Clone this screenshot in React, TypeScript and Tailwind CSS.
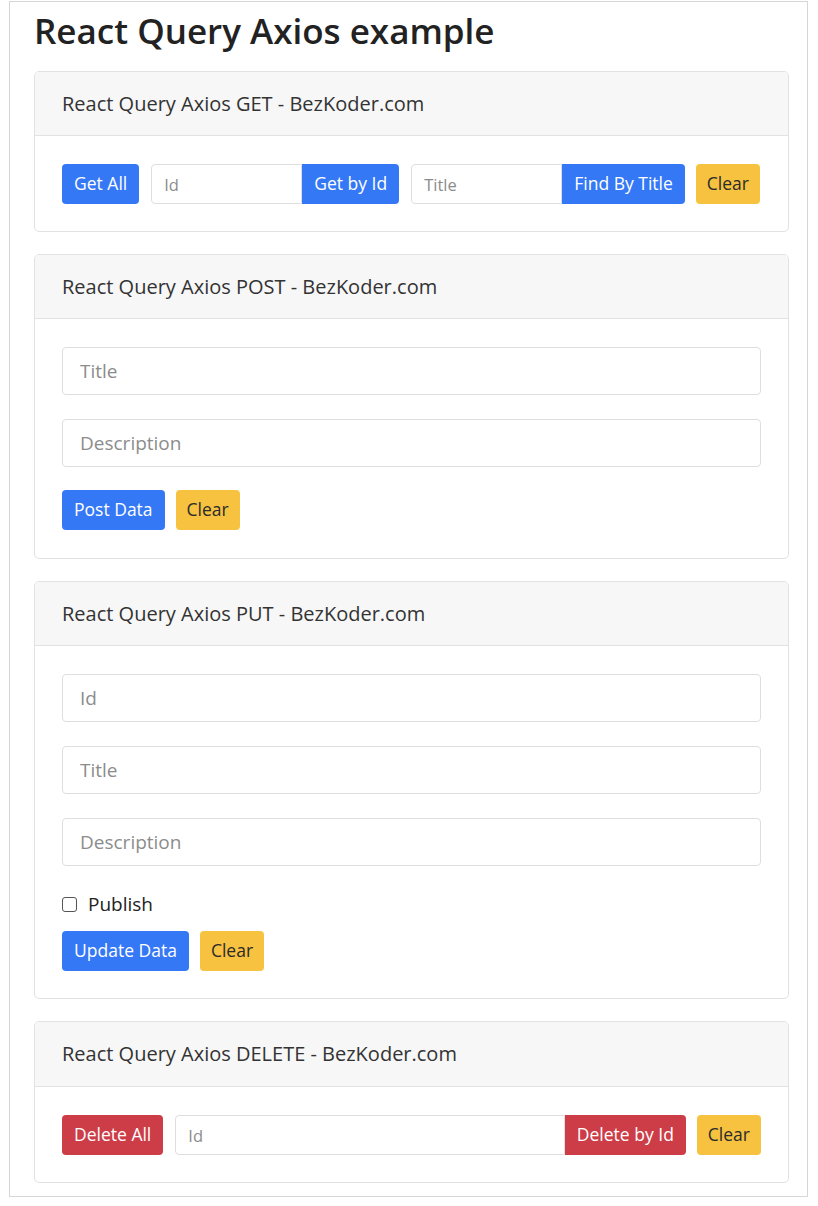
import React from "react";

const font = { fontFamily: '"Open Sans", "Noto Sans", Arial, sans-serif' };

function Btn({ children, color }: { children: React.ReactNode; color: "blue" | "yellow" | "red" }) {
  const cls =
    color === "blue"
      ? "bg-[#3478f6] text-white px-[12px]"
      : color === "red"
      ? "bg-[#cc3d47] text-white px-[12px]"
      : "bg-[#f6c240] text-[#2b2b2b] px-[11px]";
  return (
    <button className={`${cls} h-[40px] rounded-[4px] text-[17.5px] leading-none whitespace-nowrap`}>
      {children}
    </button>
  );
}

function GroupBtn({ children, color }: { children: React.ReactNode; color: "blue" | "red" }) {
  const cls = color === "blue" ? "bg-[#3478f6] text-white" : "bg-[#cc3d47] text-white";
  return (
    <button className={`${cls} h-[40px] px-[12px] rounded-r-[4px] text-[17.5px] leading-none whitespace-nowrap`}>
      {children}
    </button>
  );
}

function SmallInput({ placeholder, className }: { placeholder: string; className: string }) {
  return (
    <input
      placeholder={placeholder}
      className={`${className} h-[40px] border border-[#dedede] rounded-l-[4px] px-[12px] text-[16.5px] placeholder:text-[#8c8c8c] outline-none`}
    />
  );
}

function BigInput({ placeholder }: { placeholder: string }) {
  return (
    <input
      placeholder={placeholder}
      className="w-full h-[48px] border border-[#dedede] rounded-[4px] px-[17px] text-[19px] placeholder:text-[#8c8c8c] outline-none"
    />
  );
}

function Card({ title, children, headH = "h-[64px]", pb = "pb-[27px]" }: { title: string; children: React.ReactNode; headH?: string; pb?: string }) {
  return (
    <div className="border border-[#e2e2e2] rounded-[5px] overflow-hidden">
      <div className={`${headH} bg-[#f7f7f7] border-b border-[#e2e2e2] flex items-center px-[27px] text-[20px] text-[#333]`}>
        {title}
      </div>
      <div className={`px-[27px] pt-[28px] ${pb}`}>{children}</div>
    </div>
  );
}

export default function App() {
  return (
    <div className="w-[818px] h-[1206px] bg-white" style={font}>
      <div className="ml-[9px] mt-[1px] w-[799px] h-[1196px] border border-[#d6d6d6] pl-[24px] pr-[18px]">
        <h1 className="text-[35px] font-semibold text-[#222] leading-none pt-[11px] h-[69px]">React Query Axios example</h1>
        <div className="flex flex-col gap-[22px]">
          <Card title="React Query Axios GET - BezKoder.com">
            <div className="flex items-center">
              <Btn color="blue">Get All</Btn>
              <div className="flex ml-[12px]">
                <SmallInput placeholder="Id" className="w-[151px]" />
                <GroupBtn color="blue">Get by Id</GroupBtn>
              </div>
              <div className="flex ml-[12px]">
                <SmallInput placeholder="Title" className="w-[151px]" />
                <GroupBtn color="blue">Find By Title</GroupBtn>
              </div>
              <div className="ml-[11px]">
                <Btn color="yellow">Clear</Btn>
              </div>
            </div>
          </Card>
          <Card title="React Query Axios POST - BezKoder.com" pb="pb-[28px]">
            <div className="flex flex-col gap-[24px]">
              <BigInput placeholder="Title" />
              <BigInput placeholder="Description" />
            </div>
            <div className="flex gap-[11px] mt-[23px]">
              <Btn color="blue">Post Data</Btn>
              <Btn color="yellow">Clear</Btn>
            </div>
          </Card>
          <Card title="React Query Axios PUT - BezKoder.com">
            <div className="flex flex-col gap-[24px]">
              <BigInput placeholder="Id" />
              <BigInput placeholder="Title" />
              <BigInput placeholder="Description" />
            </div>
            <label className="flex items-center gap-[11px] mt-[27px] h-[22px] text-[19px] text-[#222]">
              <span className="w-[15px] h-[15px] border border-[#555] rounded-[3px] bg-white"></span>
              Publish
            </label>
            <div className="flex gap-[11px] mt-[16px]">
              <Btn color="blue">Update Data</Btn>
              <Btn color="yellow">Clear</Btn>
            </div>
          </Card>
          <Card title="React Query Axios DELETE - BezKoder.com" headH="h-[65px]" pb="pb-[27px]">
            <div className="flex items-center">
              <Btn color="red">Delete All</Btn>
              <div className="flex ml-[12px] flex-1">
                <SmallInput placeholder="Id" className="flex-1 min-w-0" />
                <GroupBtn color="red">Delete by Id</GroupBtn>
              </div>
              <div className="ml-[11px]">
                <Btn color="yellow">Clear</Btn>
              </div>
            </div>
          </Card>
        </div>
      </div>
    </div>
  );
}
